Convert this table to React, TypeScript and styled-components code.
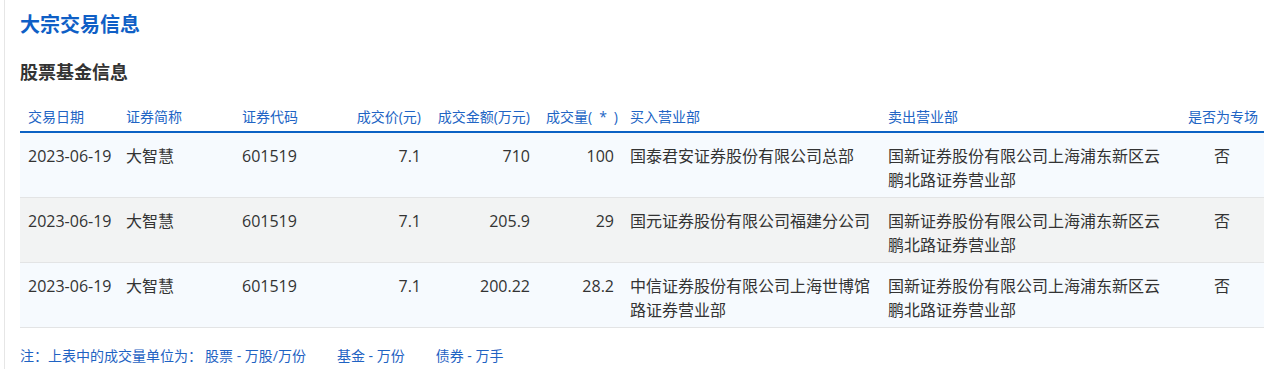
import React from 'react';
import styled, { createGlobalStyle } from 'styled-components';

const GlobalStyle = createGlobalStyle`
  body {
    margin: 0;
    background: #fff;
    font-family: 'Open Sans', 'Noto Sans CJK SC', sans-serif;
  }
`;

const Page = styled.div`
  margin-left: 4px;
  border-left: 1px solid #e6e6e6;
  padding: 11px 6px 0 15px;
  min-height: 369px;
  box-sizing: border-box;
`;

const Title = styled.h2`
  margin: 0;
  font-size: 20px;
  line-height: 28px;
  font-weight: 700;
  color: #0f5fc6;
`;

const SubTitle = styled.h3`
  margin: 20px 0 0;
  font-size: 18px;
  line-height: 26px;
  font-weight: 700;
  color: #333;
`;

const Table = styled.table`
  margin-top: 15px;
  width: 100%;
  border-collapse: collapse;
  table-layout: fixed;
`;

type CellProps = {
  $align?: 'left' | 'right' | 'center';
};

const Th = styled.th<CellProps>`
  height: 31px;
  padding: 0 8px;
  font-size: 14px;
  font-weight: 400;
  color: #2164c4;
  text-align: ${(props) => props.$align || 'left'};
  white-space: nowrap;
  border-bottom: 2px solid #0b62c4;
`;

const Row = styled.tr<{ $striped: boolean }>`
  height: 65px;
  background: ${(props) => (props.$striped ? '#f2f3f3' : '#f6fafe')};
  border-bottom: 1px solid #e3e4e5;
`;

const Td = styled.td<CellProps>`
  padding: 11px 8px 0;
  vertical-align: top;
  font-size: 16px;
  line-height: 24px;
  color: #333;
  text-align: ${(props) => props.$align || 'left'};
`;

const DateCell = styled(Td)`
  white-space: nowrap;
`;

const Note = styled.div`
  display: flex;
  margin-top: 18px;
  font-size: 14px;
  line-height: 20px;
  color: #1f63c3;
  white-space: pre;
`;

const NoteItem = styled.span<{ $gap: number }>`
  margin-left: ${(props) => props.$gap}px;
`;

type Trade = {
  date: string;
  name: string;
  code: string;
  price: string;
  amount: string;
  volume: string;
  buyer: string;
  seller: string;
  special: string;
};

const columns: { label: string; width: number; align?: 'left' | 'right' | 'center' }[] = [
  { label: '交易日期', width: 98 },
  { label: '证券简称', width: 116 },
  { label: '证券代码', width: 90 },
  { label: '成交价(元)', width: 105, align: 'right' },
  { label: '成交金额(万元)', width: 109, align: 'right' },
  { label: '成交量(\u2002*\u2002)', width: 84, align: 'right' },
  { label: '买入营业部', width: 258 },
  { label: '卖出营业部', width: 300 },
  { label: '是否为专场', width: 84, align: 'center' },
];

const seller = '国新证券股份有限公司上海浦东新区云鹏北路证券营业部';

const trades: Trade[] = [
  {
    date: '2023-06-19',
    name: '大智慧',
    code: '601519',
    price: '7.1',
    amount: '710',
    volume: '100',
    buyer: '国泰君安证券股份有限公司总部',
    seller,
    special: '否',
  },
  {
    date: '2023-06-19',
    name: '大智慧',
    code: '601519',
    price: '7.1',
    amount: '205.9',
    volume: '29',
    buyer: '国元证券股份有限公司福建分公司',
    seller,
    special: '否',
  },
  {
    date: '2023-06-19',
    name: '大智慧',
    code: '601519',
    price: '7.1',
    amount: '200.22',
    volume: '28.2',
    buyer: '中信证券股份有限公司上海世博馆路证券营业部',
    seller,
    special: '否',
  },
];

const App = () => {
  return (
    <>
      <GlobalStyle />
      <Page>
        <Title>大宗交易信息</Title>
        <SubTitle>股票基金信息</SubTitle>
        <Table>
          <colgroup>
            {columns.map((col) => (
              <col key={col.label} style={{ width: col.width }} />
            ))}
          </colgroup>
          <thead>
            <tr>
              {columns.map((col) => (
                <Th key={col.label} $align={col.align}>
                  {col.label}
                </Th>
              ))}
            </tr>
          </thead>
          <tbody>
            {trades.map((t, i) => (
              <Row key={i} $striped={i % 2 === 1}>
                <DateCell>{t.date}</DateCell>
                <Td>{t.name}</Td>
                <Td>{t.code}</Td>
                <Td $align="right">{t.price}</Td>
                <Td $align="right">{t.amount}</Td>
                <Td $align="right">{t.volume}</Td>
                <Td>{t.buyer}</Td>
                <Td>{t.seller}</Td>
                <Td $align="center">{t.special}</Td>
              </Row>
            ))}
          </tbody>
        </Table>
        <Note>
          <span>注：上表中的成交量单位为：</span>
          <NoteItem $gap={3}>股票 - 万股/万份</NoteItem>
          <NoteItem $gap={31}>基金 - 万份</NoteItem>
          <NoteItem $gap={31}>债券 - 万手</NoteItem>
        </Note>
      </Page>
    </>
  );
};

export default App;
